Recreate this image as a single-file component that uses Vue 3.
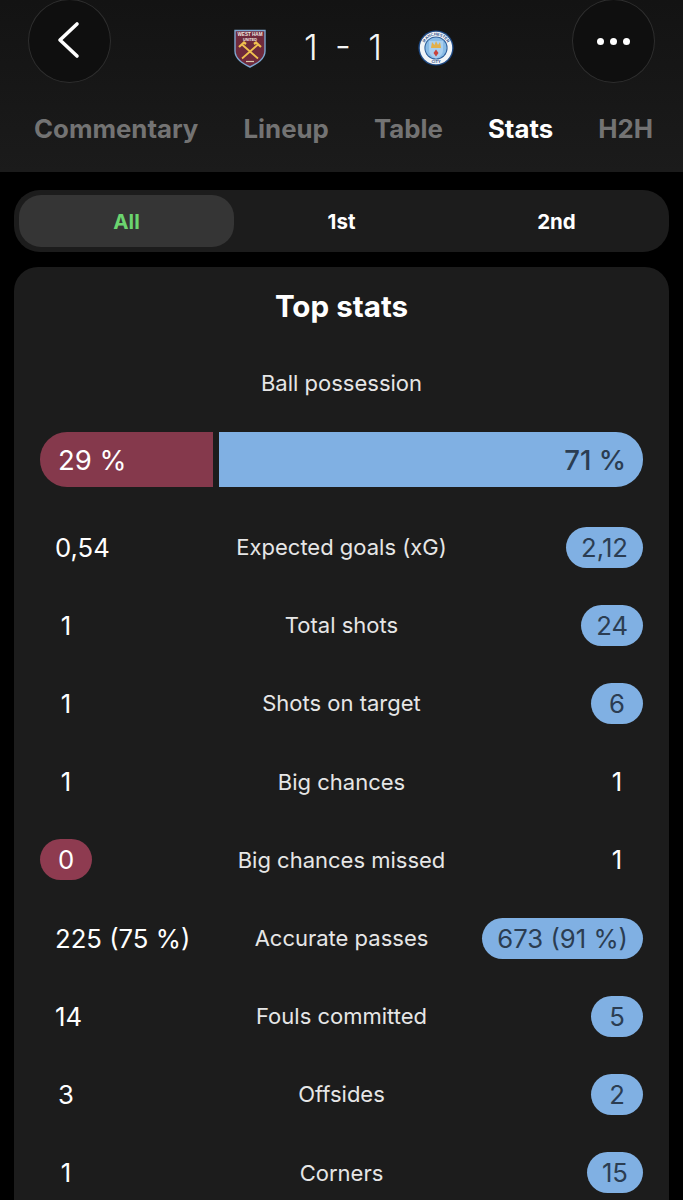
<script setup>
const tabs = [
  { label: 'Commentary' },
  { label: 'Lineup' },
  { label: 'Table' },
  { label: 'Stats', active: true },
  { label: 'H2H' },
]
const periods = ['All', '1st', '2nd']
const rows = [
  { l: '0,54', name: 'Expected goals (xG)', r: '2,12', win: 'r' },
  { l: '1', name: 'Total shots', r: '24', win: 'r' },
  { l: '1', name: 'Shots on target', r: '6', win: 'r' },
  { l: '1', name: 'Big chances', r: '1', win: '' },
  { l: '0', name: 'Big chances missed', r: '1', win: 'l' },
  { l: '225 (75 %)', name: 'Accurate passes', r: '673 (91 %)', win: 'r' },
  { l: '14', name: 'Fouls committed', r: '5', win: 'r' },
  { l: '3', name: 'Offsides', r: '2', win: 'r' },
  { l: '1', name: 'Corners', r: '15', win: 'r' },
]
</script>

<template>
  <div class="page">
    <header class="header">
      <div class="top">
        <button class="round">
          <svg class="chev" width="26" height="38" viewBox="0 0 26 38"><path d="M22 3 L5 19 L22 35" fill="none" stroke="#fff" stroke-width="3.6" stroke-linecap="round" stroke-linejoin="round"/></svg>
        </button>
        <div class="score">
          <svg class="crest" width="32" height="39" viewBox="0 0 32 39">
            <path d="M1 1.5 L31 1.5 L31 22 C31 30 23 34.5 16 38 C9 34.5 1 30 1 22 Z" fill="#6f2a3c" stroke="#7fa6cf" stroke-width="1.4"/>
            <text x="16" y="7.4" text-anchor="middle" class="crest-t" font-size="4.6">WEST HAM</text>
            <text x="16" y="12" text-anchor="middle" class="crest-t" font-size="3.8">UNITED</text>
            <path d="M8 15.5 L24 29.5 M24 15.5 L8 29.5" stroke="#f0c04e" stroke-width="1.8"/>
            <path d="M5 18 L10 13.5 L12 15 M27 18 L22 13.5 L20 15" fill="none" stroke="#f0c04e" stroke-width="2.2"/>
            <path d="M12 32.5 H20" stroke="#d9c9a8" stroke-width="1.2"/>
          </svg>
          <span class="goals">1 - 1</span>
          <svg class="crest" width="36" height="36" viewBox="0 0 36 36">
            <circle cx="18" cy="18" r="17.6" fill="#1f4a85"/>
            <circle cx="18" cy="18" r="16.2" fill="#f2f5f8"/>
            <circle cx="18" cy="18" r="11.6" fill="#2f5f9b"/>
            <circle cx="18" cy="18" r="10.6" fill="#88bbe6"/>
            <path id="cityArc" d="M5.5 18 A12.5 12.5 0 0 1 30.5 18" fill="none"/>
            <text class="city-t" font-size="4"><textPath href="#cityArc" startOffset="50%" text-anchor="middle">MANCHESTER</textPath></text>
            <text x="18" y="33" text-anchor="middle" class="city-t" font-size="4">CITY</text>
            <path d="M11 11 H25 V20 C25 25 21 27 18 28.5 C15 27 11 25 11 20 Z" fill="#a8cff0"/>
            <path d="M13 18 L14 12 L16.5 15 L18 11 L20 15 L22 12 L23 18 Z" fill="#e2b04a"/>
            <path d="M18 19.5 L20.5 23 L18 26.5 L15.5 23 Z" fill="#c8433c"/>
          </svg>
        </div>
        <button class="round">
          <span class="dots"><i></i><i></i><i></i></span>
        </button>
      </div>
      <nav class="tabs">
        <span v-for="t in tabs" :key="t.label" class="tab" :class="{ on: t.active }">{{ t.label }}</span>
      </nav>
    </header>

    <div class="segment">
      <span v-for="(p, i) in periods" :key="p" class="seg" :class="{ sel: i === 0 }">{{ p }}</span>
    </div>

    <section class="card">
      <h2>Top stats</h2>
      <div class="poss-label">Ball possession</div>
      <div class="bar">
        <div class="home">29 %</div>
        <div class="away">71 %</div>
      </div>
      <div class="rows">
        <div v-for="r in rows" :key="r.name" class="row">
          <div class="side left"><span class="val" :class="{ wl: r.win === 'l' }">{{ r.l }}</span></div>
          <div class="name">{{ r.name }}</div>
          <div class="side right"><span class="val" :class="{ wr: r.win === 'r' }">{{ r.r }}</span></div>
        </div>
      </div>
    </section>
  </div>
</template>

<style scoped>
.page {
  width: 683px;
  height: 1200px;
  overflow: hidden;
  background: #000;
  color: #fff;
  font-family: Inter, "Liberation Sans", sans-serif;
}
.header {
  height: 172px;
  background: linear-gradient(#131313, #1b1b1b);
  box-sizing: border-box;
}
.top {
  height: 83px;
  padding: 0 28px;
  display: flex;
  justify-content: space-between;
}
.round {
  width: 83px;
  height: 84px;
  border-radius: 50%;
  background: #0f0f0f;
  border: 1px solid #2e2e2e;
  display: flex;
  align-items: center;
  justify-content: center;
  padding: 0;
  transform: translateY(-1px);
}
.chev { margin-right: 4px; margin-bottom: 2px; }
.dots { display: flex; gap: 6px; margin-top: 1px; }
.dots i { width: 7px; height: 7px; border-radius: 50%; background: #fff; display: block; }
.score {
  display: flex;
  align-items: center;
  height: 96px;
  padding-left: 4px;
}
.goals {
  font-size: 35px;
  font-weight: 300;
  width: 79px;
  margin: 0 35px 0 38px;
  text-align: center;
  white-space: nowrap;
  word-spacing: 7.5px;
  color: #f5f5f5;
  position: relative;
  top: -1px;
}
.crest { display: block; }
.crest-t { fill: #f1e9e2; font-family: "Liberation Sans", sans-serif; font-weight: 700; }
.city-t { fill: #1f4a85; font-family: "Liberation Sans", sans-serif; font-weight: 700; }
.tabs {
  display: flex;
  justify-content: space-between;
  padding: 0 30px 0 34px;
  margin-top: 30px;
}
.tab {
  font-size: 25.8px;
  font-weight: 700;
  line-height: 32px;
  color: #737373;
}
.tab.on { color: #fff; }
.segment {
  margin: 18px 14px 0;
  height: 62px;
  box-sizing: border-box;
  padding: 5px;
  border-radius: 26px;
  background: #1c1c1c;
  display: grid;
  grid-template-columns: repeat(3, 1fr);
}
.seg {
  border-radius: 22px;
  display: flex;
  align-items: center;
  justify-content: center;
  font-size: 20.5px;
  font-weight: 700;
}
.seg.sel { background: #353535; color: #6bd46f; }
.card {
  margin: 15px 14px 0;
  background: #1c1c1c;
  border-radius: 24px 24px 0 0;
  height: 940px;
  padding: 0 26px;
}
h2 {
  margin: 0;
  padding-top: 22px;
  text-align: center;
  font-size: 29.6px;
  line-height: 34px;
  font-weight: 700;
}
.poss-label {
  margin-top: 47px;
  text-align: center;
  font-size: 22px;
  line-height: 26px;
  color: #e6e6e6;
}
.bar {
  margin-top: 36px;
  height: 55px;
  display: flex;
  gap: 6px;
  font-size: 27.5px;
}
.home, .away { display: flex; align-items: center; }
.home {
  width: 173px;
  background: #85394c;
  border-radius: 27px 0 0 27px;
  padding-left: 18px;
  box-sizing: border-box;
}
.away {
  flex: 1;
  background: #80b0e3;
  border-radius: 0 27px 27px 0;
  justify-content: flex-end;
  padding-right: 17px;
  color: #2b3d52;
  font-weight: 500;
}
.rows { margin-top: 21px; }
.row {
  height: 78.2px;
  display: grid;
  grid-template-columns: 1fr auto 1fr;
  align-items: center;
  font-size: 25.7px;
}
.name {
  font-size: 22px;
  color: #e6e6e6;
  text-align: center;
  white-space: nowrap;
}
.side { display: flex; white-space: nowrap; }
.right { justify-content: flex-end; }
.val {
  display: block;
  height: 41px;
  line-height: 41px;
  min-width: 52px;
  text-align: center;
  padding: 0 15px;
  border-radius: 21px;
  box-sizing: border-box;
}
.wr { background: #80b0e3; color: #2b3d52; }
.wl { background: #8e3b50; }
</style>
